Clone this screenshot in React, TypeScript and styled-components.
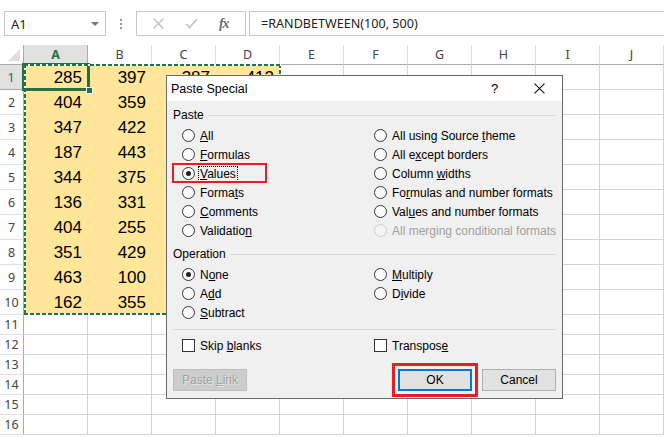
import React from 'react'
import styled, { createGlobalStyle, css } from 'styled-components'

const GlobalStyle = createGlobalStyle`
  html, body {
    margin: 0;
    padding: 0;
    background: #ffffff;
    overflow: hidden;
  }
  body {
    font-family: 'Noto Sans', 'Liberation Sans', sans-serif;
    color: #222;
  }
`

const UI = `'Noto Sans', 'Liberation Sans', sans-serif`
const DLG = `'Liberation Sans', Arial, sans-serif`
const GREEN = '#217346'
const FILL = '#ffe699'

const Page = styled.div`
  width: 664px;
  height: 437px;
  overflow: hidden;
  background: #fff;
`

/* ---------- formula bar ---------- */

const FormulaBar = styled.div`
  height: 45px;
  box-sizing: border-box;
  padding: 11px 0 0 4px;
  display: flex;
  align-items: flex-start;
`

const NameBox = styled.div`
  width: 102px;
  height: 25px;
  box-sizing: border-box;
  border: 1px solid #c6c6c6;
  display: flex;
  align-items: center;
  justify-content: space-between;
  padding: 0 6px 0 6px;
  font-family: ${UI};
  font-size: 13px;
  color: #222;
`

const DropTriangle = styled.span`
  width: 0;
  height: 0;
  border-left: 4px solid transparent;
  border-right: 4px solid transparent;
  border-top: 4px solid #777;
`

const Grip = styled.div`
  width: 30px;
  height: 25px;
  display: flex;
  flex-direction: column;
  align-items: center;
  justify-content: center;
  gap: 2px;

  span {
    width: 2px;
    height: 2px;
    background: #9a9a9a;
  }
`

const FxButtons = styled.div`
  width: 110px;
  height: 25px;
  box-sizing: border-box;
  border: 1px solid #c6c6c6;
  display: flex;
  align-items: center;
  justify-content: space-around;
  padding: 0 6px;
`

const FxText = styled.span`
  font-family: 'Liberation Serif', serif;
  font-style: italic;
  font-weight: bold;
  font-size: 14px;
  color: #6e6e6e;
  letter-spacing: -1px;
`

const FormulaInput = styled.div`
  flex: 1;
  height: 25px;
  margin-left: 3px;
  box-sizing: border-box;
  border-top: 1px solid #c6c6c6;
  border-bottom: 1px solid #c6c6c6;
  border-left: 1px solid #c6c6c6;
  display: flex;
  align-items: center;
  padding-left: 11px;
  font-family: ${UI};
  font-size: 12.6px;
  color: #222;
`

/* ---------- sheet ---------- */

const SheetArea = styled.div`
  position: relative;
  height: 392px;
`

const Sheet = styled.div`
  display: grid;
  grid-template-columns: 24px repeat(10, 64px);
  grid-template-rows: 20px repeat(10, 25px) repeat(6, 20px);
`

const Corner = styled.div`
  position: relative;
  box-sizing: border-box;
  border-right: 1px solid #ababab;
  border-bottom: 1px solid #ababab;

  &::after {
    content: '';
    position: absolute;
    right: 3px;
    bottom: 3px;
    border-left: 12px solid transparent;
    border-bottom: 12px solid #dfdfdf;
  }
`

const ColHead = styled.div<{ $active?: boolean }>`
  box-sizing: border-box;
  border-right: 1px solid #e1e1e1;
  border-bottom: 1px solid #ababab;
  display: flex;
  align-items: center;
  justify-content: center;
  font-family: ${UI};
  font-size: 12.5px;
  color: #444;
  ${(p) =>
    p.$active &&
    css`
      background: #e1e1e1;
      color: ${GREEN};
      font-weight: bold;
      border-bottom: 2px solid ${GREEN};
      border-right-color: #ababab;
    `}
`

const RowHead = styled.div<{ $active?: boolean }>`
  box-sizing: border-box;
  border-right: 1px solid #ababab;
  border-bottom: 1px solid #e1e1e1;
  display: flex;
  align-items: center;
  justify-content: center;
  font-family: ${UI};
  font-size: 12.5px;
  color: #444;
  ${(p) =>
    p.$active &&
    css`
      background: #e1e1e1;
      color: ${GREEN};
      border-right: 2px solid ${GREEN};
      border-bottom-color: #ababab;
    `}
`

const Cell = styled.div<{ $fill?: boolean }>`
  box-sizing: border-box;
  border-right: 1px solid #d4d4d4;
  border-bottom: 1px solid #d4d4d4;
  display: flex;
  align-items: flex-end;
  justify-content: flex-end;
  padding: 0 5px 1px 0;
  font-family: 'Liberation Sans', Arial, sans-serif;
  font-size: 17px;
  line-height: 20px;
  color: #000;
  ${(p) =>
    p.$fill &&
    css`
      background: ${FILL};
      border-color: ${FILL};
    `}
`

const ActiveCell = styled.div`
  position: absolute;
  left: 22px;
  top: 18px;
  width: 68px;
  height: 28px;
  box-sizing: border-box;
  border: 3px solid ${GREEN};

  &::after {
    content: '';
    position: absolute;
    right: -6px;
    bottom: -6px;
    width: 5px;
    height: 5px;
    background: ${GREEN};
    border: 1px solid #fff;
    z-index: 2;
  }
`

const CopyRange = styled.div`
  position: absolute;
  left: 24px;
  top: 19px;
  width: 257px;
  height: 251px;
  pointer-events: none;
  background:
    repeating-linear-gradient(90deg, ${GREEN} 0 4px, #fff 4px 6px) top / 100% 2px no-repeat,
    repeating-linear-gradient(90deg, ${GREEN} 0 4px, #fff 4px 6px) bottom / 100% 2px no-repeat,
    repeating-linear-gradient(180deg, ${GREEN} 0 4px, #fff 4px 6px) left / 2px 100% no-repeat,
    repeating-linear-gradient(180deg, ${GREEN} 0 4px, #fff 4px 6px) right / 2px 100% no-repeat;
`

/* ---------- dialog ---------- */

const Dialog = styled.div`
  position: absolute;
  left: 166px;
  top: 30px;
  width: 397px;
  height: 324px;
  box-sizing: border-box;
  border: 1px solid #6a6a6a;
  background: #f0f0f0;
  display: flex;
  flex-direction: column;
  font-family: ${DLG};
  font-size: 12px;
  color: #000;
`

const TitleBar = styled.div`
  height: 25px;
  background: #fff;
  display: flex;
  align-items: center;
  padding-left: 4px;
  font-size: 12.5px;
`

const TitleText = styled.span`
  flex: 1;
`

const TitleButton = styled.span`
  width: 45px;
  height: 25px;
  display: flex;
  align-items: center;
  justify-content: center;
  font-size: 13px;
`

const Body = styled.div`
  position: relative;
  flex: 1;
  display: flex;
  flex-direction: column;
  padding: 4px 6px 0 6px;
`

const Legend = styled.div<{ $gapTop?: number }>`
  height: 20px;
  margin-top: ${(p) => p.$gapTop ?? 0}px;
  display: flex;
  align-items: center;
  gap: 4px;

  &::after {
    content: '';
    flex: 1;
    height: 1px;
    background: #d9d9d9;
  }
`

const OptionGrid = styled.div<{ $rows: number }>`
  display: grid;
  grid-template-columns: 192px 1fr;
  grid-template-rows: repeat(${(p) => p.$rows}, 19px);
  grid-auto-flow: column;
  padding-left: 9px;
  margin-top: 1px;
`

const Option = styled.label<{ $disabled?: boolean }>`
  display: flex;
  align-items: center;
  gap: 5px;
  color: ${(p) => (p.$disabled ? '#a0a0a0' : '#000')};
  white-space: nowrap;
`

const Radio = styled.span<{ $checked?: boolean; $disabled?: boolean }>`
  width: 13px;
  height: 13px;
  box-sizing: border-box;
  border-radius: 50%;
  border: 1px solid ${(p) => (p.$disabled ? '#cccccc' : '#333')};
  background: ${(p) => (p.$disabled ? '#f4f4f4' : '#fff')};
  display: flex;
  align-items: center;
  justify-content: center;
  flex-shrink: 0;

  &::after {
    content: '';
    display: ${(p) => (p.$checked ? 'block' : 'none')};
    width: 5px;
    height: 5px;
    border-radius: 50%;
    background: #222;
  }
`

const Check = styled.span`
  width: 13px;
  height: 13px;
  box-sizing: border-box;
  border: 1px solid #333;
  background: #fff;
  flex-shrink: 0;
`

const Focus = styled.span`
  outline: 1px dotted #000;
  outline-offset: 0;
  padding: 0 1px;
  margin-left: -1px;
`

const Divider = styled.div`
  height: 1px;
  background: #d9d9d9;
  margin: 7px 0 6px 0;
`

const CheckRow = styled.div`
  display: grid;
  grid-template-columns: 192px 1fr;
  height: 19px;
  padding-left: 9px;
`

const ButtonRow = styled.div`
  display: flex;
  align-items: center;
  gap: 10px;
  margin-top: 14px;
`

const Button = styled.div<{ $variant?: 'default' | 'disabled' }>`
  width: 74px;
  height: 22px;
  box-sizing: border-box;
  border: 1px solid #adadad;
  background: #e1e1e1;
  display: flex;
  align-items: center;
  justify-content: center;
  ${(p) =>
    p.$variant === 'default' &&
    css`
      border: 2px solid #0078d7;
    `}
  ${(p) =>
    p.$variant === 'disabled' &&
    css`
      background: #cccccc;
      border-color: #bfbfbf;
      color: #a3a3a3;
      text-shadow: 1px 1px 0 #e6e6e6;
    `}
`

const Spacer = styled.div`
  flex: 1;
`

const Highlight = styled.div<{ $x: number; $y: number; $w: number; $h: number; $t: number }>`
  position: absolute;
  left: ${(p) => p.$x}px;
  top: ${(p) => p.$y}px;
  width: ${(p) => p.$w}px;
  height: ${(p) => p.$h}px;
  box-sizing: border-box;
  border: ${(p) => p.$t}px solid #ed1c24;
  pointer-events: none;
`

/* ---------- data ---------- */

const COLS = ['A', 'B', 'C', 'D', 'E', 'F', 'G', 'H', 'I', 'J']
const DATA: number[][] = [
  [285, 397, 387, 412],
  [404, 359, 318, 276],
  [347, 422, 129, 305],
  [187, 443, 266, 181],
  [344, 375, 452, 233],
  [136, 331, 197, 460],
  [404, 255, 341, 122],
  [351, 429, 288, 397],
  [463, 100, 173, 254],
  [162, 355, 410, 366],
]

// label with one underlined access key
const Key = ({ text, at }: { text: string; at: number }) => (
  <span>
    {text.slice(0, at)}
    <u>{text[at]}</u>
    {text.slice(at + 1)}
  </span>
)

type Opt = { text: string; at: number; checked?: boolean; disabled?: boolean; focus?: boolean }

const PASTE: Opt[] = [
  { text: 'All', at: 0 },
  { text: 'Formulas', at: 0 },
  { text: 'Values', at: 0, checked: true, focus: true },
  { text: 'Formats', at: 5 },
  { text: 'Comments', at: 0 },
  { text: 'Validation', at: 9 },
  { text: 'All using Source theme', at: 17 },
  { text: 'All except borders', at: 5 },
  { text: 'Column widths', at: 7 },
  { text: 'Formulas and number formats', at: 2 },
  { text: 'Values and number formats', at: 3 },
  { text: 'All merging conditional formats', at: -1, disabled: true },
]

const OPERATION: (Opt | null)[] = [
  { text: 'None', at: 1, checked: true },
  { text: 'Add', at: 1 },
  { text: 'Subtract', at: 0 },
  { text: 'Multiply', at: 0 },
  { text: 'Divide', at: 1 },
  null,
]

const OptionItem = ({ o }: { o: Opt }) => {
  const label = o.at < 0 ? <span>{o.text}</span> : <Key text={o.text} at={o.at} />
  return (
    <Option $disabled={o.disabled}>
      <Radio $checked={o.checked} $disabled={o.disabled} />
      {o.focus ? <Focus>{label}</Focus> : label}
    </Option>
  )
}

const XIcon = ({ size, color, w }: { size: number; color: string; w: number }) => (
  <svg width={size} height={size} viewBox='0 0 10 10'>
    <path d='M0.5 0.5 L9.5 9.5 M9.5 0.5 L0.5 9.5' stroke={color} strokeWidth={w} fill='none' />
  </svg>
)

const CheckIcon = () => (
  <svg width='13' height='11' viewBox='0 0 13 11'>
    <path d='M1 6 L4.5 9.5 L12 1' stroke='#c3c3c3' strokeWidth='1.6' fill='none' />
  </svg>
)

const App = () => {
  const rows = Array.from({ length: 16 }, (_, i) => i + 1)

  return (
    <Page>
      <GlobalStyle />
      <FormulaBar>
        <NameBox>
          <span>A1</span>
          <DropTriangle />
        </NameBox>
        <Grip>
          <span />
          <span />
          <span />
        </Grip>
        <FxButtons>
          <XIcon size={11} color='#c3c3c3' w={1.4} />
          <CheckIcon />
          <FxText>fx</FxText>
        </FxButtons>
        <FormulaInput>=RANDBETWEEN(100, 500)</FormulaInput>
      </FormulaBar>

      <SheetArea>
        <Sheet>
          <Corner />
          {COLS.map((c, i) => (
            <ColHead key={c} $active={i === 0}>
              {c}
            </ColHead>
          ))}
          {rows.map((r) => (
            <React.Fragment key={r}>
              <RowHead $active={r === 1}>{r}</RowHead>
              {COLS.map((c, ci) => {
                const v = r <= 10 && ci < 4 ? DATA[r - 1][ci] : undefined
                return (
                  <Cell key={c} $fill={v !== undefined}>
                    {v}
                  </Cell>
                )
              })}
            </React.Fragment>
          ))}
        </Sheet>

        <ActiveCell />
        <CopyRange />

        <Dialog>
          <TitleBar>
            <TitleText>Paste Special</TitleText>
            <TitleButton>?</TitleButton>
            <TitleButton>
              <XIcon size={11} color='#111' w={1} />
            </TitleButton>
          </TitleBar>
          <Body>
            <Legend>Paste</Legend>
            <OptionGrid $rows={6}>
              {PASTE.map((o) => (
                <OptionItem key={o.text} o={o} />
              ))}
            </OptionGrid>
            <Legend $gapTop={4}>Operation</Legend>
            <OptionGrid $rows={3}>
              {OPERATION.map((o, i) => (o ? <OptionItem key={o.text} o={o} /> : <span key={i} />))}
            </OptionGrid>
            <Divider />
            <CheckRow>
              <Option>
                <Check />
                <Key text='Skip blanks' at={5} />
              </Option>
              <Option>
                <Check />
                <Key text='Transpose' at={8} />
              </Option>
            </CheckRow>
            <ButtonRow>
              <Button $variant='disabled'>
                <Key text='Paste Link' at={6} />
              </Button>
              <Spacer />
              <Button $variant='default'>OK</Button>
              <Button>Cancel</Button>
            </ButtonRow>

            <Highlight $x={5} $y={62} $w={95} $h={20} $t={2} />
            <Highlight $x={225} $y={262} $w={86} $h={34} $t={3} />
          </Body>
        </Dialog>
      </SheetArea>
    </Page>
  )
}

export default App
